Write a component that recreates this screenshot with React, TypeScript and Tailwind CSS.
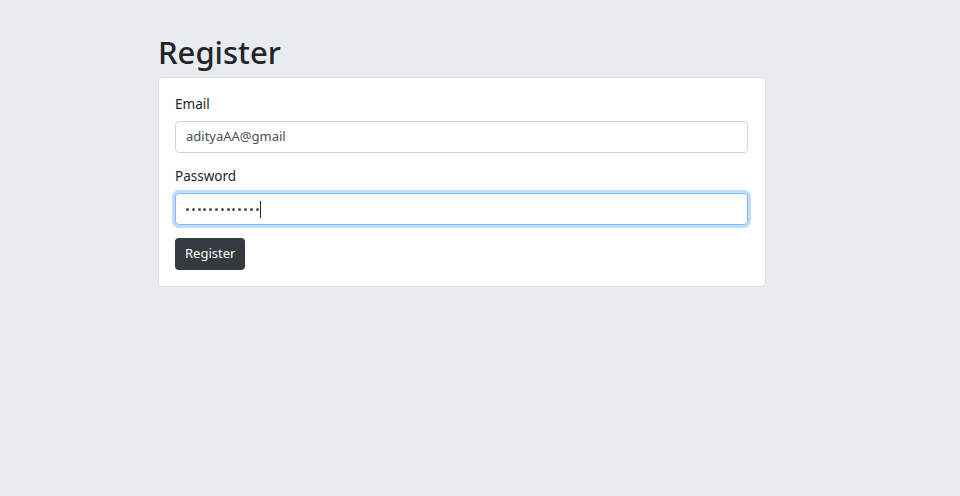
const App = () => {
  return (
    <div
      className="min-h-screen w-full bg-[#e9ecef] pt-[31px] pl-[158px]"
      style={{ fontFamily: '"Noto Sans", "Open Sans", sans-serif' }}
    >
      <div className="w-[608px]">
        <h1 className="text-[31px] font-medium leading-[42px] text-[#212529] mb-[4px]">
          Register
        </h1>

        <div className="rounded-[4px] border border-[#dcdfe3] bg-white pl-[16px] pr-[17px] pt-[16px] pb-[16px]">
          <div className="mb-[13px]">
            <label className="block text-[13.5px] text-[#212529] leading-[20px] mb-[7px]">
              Email
            </label>
            <div className="flex h-[32px] items-center rounded-[4px] border border-[#ced4da] bg-white px-[10px] text-[13px] text-[#495057]">
              adityaAA@gmail
            </div>
          </div>

          <div className="mb-[13px]">
            <label className="block text-[13.5px] text-[#212529] leading-[20px] mb-[7px]">
              Password
            </label>
            <div className="flex h-[32px] items-center rounded-[4px] border border-[#80bdff] bg-white px-[10px] shadow-[0_0_0_3px_rgba(0,123,255,0.25)]">
              <span className="flex items-center gap-[2.8px]">
                {Array.from({ length: 13 }).map((_, i) => (
                  <span key={i} className="block h-[3px] w-[3px] rounded-full bg-[#495057]" />
                ))}
              </span>
              <span className="ml-[1px] inline-block h-[17px] w-px bg-[#212529]" />
            </div>
          </div>

          <button className="h-[32px] rounded-[4px] bg-[#343a40] px-[10px] text-[13px] text-white">
            Register
          </button>
        </div>
      </div>
    </div>
  );
};

export default App;
